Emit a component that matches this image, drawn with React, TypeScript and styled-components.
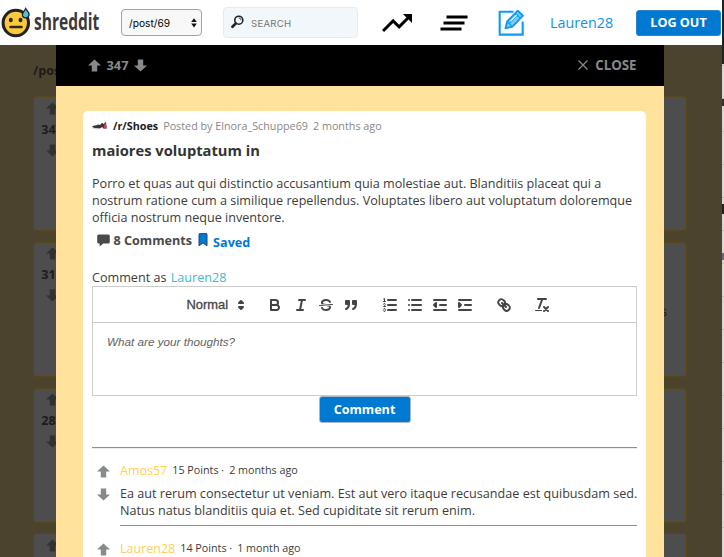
import React from "react";
import styled, { createGlobalStyle } from "styled-components";
import { MdClearAll, MdTrendingUp } from "react-icons/md";

const GlobalStyle = createGlobalStyle`
  *, *::before, *::after { box-sizing: border-box; }
  body { margin: 0; overflow: hidden; font-family: "Open Sans", sans-serif; font-size: 12.61px; line-height: 17px; color: #3c3c3c; }
  button { font-family: inherit; }
`;

/* ---------- Shell ---------- */

const Screen = styled.div`
  display: grid;
  grid-template-columns: 722px 2px;
  height: 557px;
  overflow: hidden;
  background: #fff;
`;

const Site = styled.div`
  display: flex;
  flex-direction: column;
  min-height: 0;
`;

const WindowEdge = styled.div`
  background:
    linear-gradient(#333, #333) 0 99px / 2px 7px no-repeat,
    linear-gradient(#222, #222) 0 204px / 2px 10px no-repeat,
    linear-gradient(#667, #667) 0 253px / 2px 7px no-repeat,
    linear-gradient(#1d2427, #1d2427) 0 0 / 2px 64px no-repeat,
    repeating-linear-gradient(#d9d9d9 0 32px, #bcbcbc 32px 33px);
`;

const Header = styled.header`
  display: flex;
  align-items: center;
  flex: 0 0 45px;
  padding-left: 1px;
  background: #fff;
`;

const Brand = styled.a`
  display: flex;
  align-items: center;
  gap: 2px;
  flex: 0 0 120px;
  width: 120px;
  & > svg { flex: none; }
`;

const BrandName = styled.span`
  width: 66px;
  font: 700 22.5px/30px "Open Sans", sans-serif;
  color: #3a3a3a;
  transform: scaleX(0.69);
  transform-origin: 0 50%;
  margin-top: -2px;
`;

const PageSelect = styled.button`
  display: flex;
  align-items: center;
  justify-content: space-between;
  width: 81px;
  height: 27px;
  padding: 0 4px 0 7px;
  border: 1px solid #a2a2a2;
  border-radius: 4px;
  background: #f8f8f8;
  font: 400 10.2px/14px "Inter", sans-serif;
  color: #000;
`;

const SearchBox = styled.div`
  display: flex;
  align-items: center;
  gap: 7px;
  width: 135px;
  height: 31px;
  margin-left: 21px;
  padding: 0 8px 0 7px;
  border: 1px solid #e6ebee;
  border-radius: 4px;
  background: #f2f7fb;
  font: 400 9.6px/14px "Inter", sans-serif;
  letter-spacing: 0.25px;
  color: #757575;
  & > svg { margin-top: -2px; }
`;

const SearchText = styled.span`
  padding-top: 2px;
`;

const NavIcon = styled.a<{ $gap: number }>`
  display: flex;
  margin-left: ${(p) => p.$gap}px;
  color: #000;
`;

const HeaderUser = styled.a`
  width: 64px;
  margin-left: 25px;
  font-size: 14.3px;
  color: #0d96e6;
  white-space: nowrap;
`;

const BlueButton = styled.button<{ $w: number; $h: number }>`
  width: ${(p) => p.$w}px;
  height: ${(p) => p.$h}px;
  padding: 0;
  border: 1px solid #a9b8c4;
  border-radius: 3px;
  background: #0079d3;
  color: #fff;
  font-size: 12.6px;
  font-weight: 700;
  line-height: 17px;
  white-space: nowrap;
`;

const LogOut = styled(BlueButton)`
  margin-left: 22px;
  border-color: #2a86cc;
`;

/* ---------- Dimmed feed behind the post ---------- */

const Body = styled.main`
  position: relative;
  flex: 1;
  min-height: 0;
  overflow: hidden;
  padding: 17px 35px 0 33px;
  background: #4c432f;
`;

const FeedTitle = styled.h2`
  margin: 0 0 17px;
  font-size: 12.6px;
  line-height: 17px;
  color: #1d1b18;
`;

const FeedList = styled.div`
  display: flex;
  flex-direction: column;
  gap: 10.5px;
`;

const FeedCard = styled.article`
  display: flex;
  justify-content: space-between;
  flex: 0 0 135.3px;
  border: 1px solid #584718;
  border-radius: 4px;
  background: #4d4d4d;
  color: #1c1c1c;
`;

const FeedVotes = styled.div`
  display: flex;
  flex-direction: column;
  align-items: center;
  width: 36px;
  padding-top: 4.5px;
  color: #2f3134;
  gap: 6px;
`;

const FeedScore = styled.b`
  line-height: 17px;
  color: #1c1c1c;
`;

const FeedTail = styled.span`
  padding: 60px 19px 0 0;
`;

/* ---------- Modal ---------- */

const Modal = styled.section`
  position: absolute;
  top: 0;
  bottom: 0;
  left: 56px;
  width: 608px;
  overflow: hidden;
  background: #ffe29b;
`;

const ModalBar = styled.div`
  display: flex;
  align-items: center;
  justify-content: space-between;
  height: 41px;
  padding: 0 27.5px 1px 32px;
  background: #000;
  color: #878a8c;
  font-weight: 700;
`;

const BarVotes = styled.div`
  display: flex;
  align-items: center;
  gap: 5.5px;
  font-size: 12.8px;
`;

const Close = styled.button`
  display: flex;
  align-items: center;
  gap: 7px;
  padding: 0;
  border: 0;
  background: none;
  color: #878a8c;
  font-size: 13.3px;
  font-weight: 700;
`;

const Post = styled.article`
  width: 563px;
  height: 500px;
  margin: 25px 0 0 27px;
  padding: 6px 9px 0;
  border-radius: 5px;
  background: #fff;
`;

const Meta = styled.div`
  display: flex;
  align-items: center;
  height: 17px;
  gap: 5px;
  font-size: 10.78px;
  color: #888;
`;

const Community = styled.b`
  margin-left: 1px;
  color: #1c1c1c;
`;

const Title = styled.h1`
  margin: 7px 0 15px;
  font-size: 14.7px;
  line-height: 19px;
  color: #333;
`;

const Text = styled.p`
  margin: 0;
  line-height: 17px;
  white-space: pre;
`;

const Actions = styled.div`
  display: flex;
  align-items: center;
  height: 22px;
  padding: 0 0 0 4.5px;
  margin-top: 3px;
  font-weight: 700;
  color: #4a4a4a;
`;

const CommentCount = styled.span`
  margin: 0 6px 0 4px;
`;

const Saved = styled.span`
  margin: 4px 0 0 5px;
  color: #0079d3;
`;

const CommentAs = styled.div`
  margin-top: 18px;
  height: 17px;
`;

const AccentUser = styled.a`
  color: #3fb8d3;
  margin-left: 1px;
`;

const Editor = styled.div`
  height: 110px;
  border: 1px solid #ccc;
`;

const Toolbar = styled.div`
  display: flex;
  align-items: center;
  gap: 13.2px;
  height: 36px;
  padding: 0 0 0 93.5px;
  border-bottom: 1px solid #ccc;
  color: #444;
`;

const FormatPicker = styled.div`
  display: flex;
  align-items: center;
  justify-content: space-between;
  width: 63px;
  font: 400 12.9px/18px "Liberation Sans", sans-serif;
  -webkit-text-stroke: 0.3px #444;
`;

const ToolGroup = styled.div`
  display: flex;
  & > svg { margin: 0 3.65px; }
`;

const Placeholder = styled.div`
  padding: 11px 14px;
  font: italic 400 11.7px/16px "Liberation Sans", sans-serif;
  color: #636363;
`;

const Submit = styled.div`
  display: flex;
  justify-content: center;
  height: 51px;
`;

const Thread = styled.section`
  border-top: 1px solid #8f8f8f;
  box-shadow: inset 0 1px #ececec;
  padding-top: 14px;
`;

const Comment = styled.article`
  display: grid;
  grid-template-columns: 28px 1fr;
  height: 78px;
`;

const CommentVotes = styled.div`
  display: flex;
  flex-direction: column;
  gap: 10px;
  padding: 2.5px 0 0 5px;
  color: #878a8c;
`;

const CommentBody = styled.div`
  height: 64px;
  border-bottom: 1px solid #8f8f8f;
  white-space: nowrap;
`;

const CommentMeta = styled.div`
  display: flex;
  align-items: center;
  height: 17px;
  margin-bottom: 6px;
  font-size: 10.75px;
`;

const Author = styled.a`
  margin-right: 5px;
  font-size: 12.5px;
  color: #ffd152;
`;

const Age = styled.span`
  margin-left: 5px;
`;

/* ---------- Icons ---------- */

const Glyph = styled.svg`
  flex: none;
`;

const Arrow = ({ down = false }: { down?: boolean }) => (
  <Glyph width="13" height="13" viewBox="0 0 13 13" fill="currentColor">
    <path d={down ? "M3.8 0.5h5.4v6H13L6.5 12.6 0 6.5h3.8z" : "M6.5 0.4 13 6.5H9.2v6H3.8v-6H0z"} />
  </Glyph>
);

const Face = () => (
  <svg width="31" height="31" viewBox="0 0 31 31">
    <circle cx="14.8" cy="16" r="12.7" fill="#fdc93c" stroke="#222" strokeWidth="3.1" />
    <ellipse cx="9.8" cy="13" rx="2" ry="2.2" fill="#2b2926" />
    <ellipse cx="19.5" cy="13" rx="2" ry="2.2" fill="#2b2926" />
    <path d="M9.5 20h11" stroke="#2b2926" strokeWidth="2.5" strokeLinecap="round" />
    <path d="M24.7 1.5c-1 2.1-3.3 4-3.3 6a3.3 3.3 0 0 0 6.7 0c0-2-2.3-3.9-3.4-6z" fill="#4fc3dc" stroke="#222" strokeWidth="1.3" />
  </svg>
);

const Magnifier = () => (
  <svg width="13" height="14" viewBox="0 0 13 14" fill="none" stroke="#222">
    <circle cx="7.8" cy="5.2" r="4" strokeWidth="1.6" />
    <path d="M7.8 3a2.3 2.3 0 0 1 2.2 2.2" strokeWidth="0.8" />
    <path d="M4.8 8.4 1.5 11.7" strokeWidth="2.7" strokeLinecap="round" />
  </svg>
);

const Compose = () => (
  <svg width="27" height="27" viewBox="0 0 27 27" fill="none" stroke="#0d9bf5">
    <path d="M15.5 2.7H1.7v22.9h23V12.5" strokeWidth="2.1" />
    <path d="M7.5 19.3 9.2 12.5 19.8 1.7 25 6.7 14.4 17.6z" fill="#8acbf5" strokeWidth="1.9" strokeLinejoin="round" />
    <path d="m17.2 4.4 5.1 5M9.3 12.6l5 5M11.4 14.4 20.3 5.5" strokeWidth="1.3" />
    <path d="M12.5 12.4 18.8 6" stroke="#e8f6ff" strokeWidth="1.1" />
  </svg>
);

const SelectArrows = () => (
  <svg width="6" height="10" viewBox="0 0 6 10" fill="#111">
    <path d="M3 0.2 5.8 4H0.2zM3 9.4.2 5.6h5.6z" />
  </svg>
);

const CrossIcon = () => (
  <svg width="10" height="10" viewBox="0 0 10 10" stroke="currentColor" strokeWidth="1.2">
    <path d="M0.5 0.5l9 9M9.5 0.5l-9 9" />
  </svg>
);

const Shoe = () => (
  <svg width="15" height="9" viewBox="0 0 15 9">
    <path d="M0 5.5C2 4 4 4.8 6.2 3.4L8 4 10 1.8 11.5 3 14 0.8 14.6 7.4H11L10.5 6 7.5 7.5 1.5 6.8z" fill="#363338" />
    <path d="M11.8 4 13.8 1.2 14.7 7.5H12z" fill="#d73c50" />
    <path d="M0.5 7.3 8 8.1" stroke="#bbb" strokeWidth="0.6" />
  </svg>
);

const Bubble = () => (
  <svg width="13" height="13" viewBox="0 0 13 13" fill="#4a4a4a">
    <path d="M1.7.5h9.6a1.5 1.5 0 0 1 1.5 1.5v6a1.5 1.5 0 0 1-1.5 1.5H6.3L2.7 12.6V9.5h-1A1.5 1.5 0 0 1 .2 8V2A1.5 1.5 0 0 1 1.7.5z" />
  </svg>
);

const Bookmark = () => (
  <svg width="10" height="14" viewBox="0 0 10 14">
    <path d="M1 1.2Q1 .6 1.6.6h6.8q.6 0 .6.6v11.6L5 9.9l-4 2.9z" fill="#0079d3" stroke="#29475f" />
  </svg>
);

const Tool = ({ children }: { children: React.ReactNode }) => (
  <svg width="18" height="18" viewBox="0 0 18 18" fill="none" stroke="#444" strokeWidth="2" strokeLinecap="round" strokeLinejoin="round">
    {children}
  </svg>
);

const solid = { fill: "#444", stroke: "none" };

/* ---------- Data ---------- */

const feed = [
  { score: "347", tail: "" },
  { score: "315", tail: "s" },
  { score: "289", tail: "" },
];

const comments = [
  { author: "Amos57", points: "15 Points ·", age: "2 months ago", text: "Ea aut rerum consectetur ut veniam. Est aut vero itaque recusandae est quibusdam sed.\nNatus natus blanditiis quia et. Sed cupiditate sit rerum enim." },
  { author: "Lauren28", points: "14 Points ·", age: "1 month ago", text: "" },
];

export default function App() {
  return (
    <Screen>
      <GlobalStyle />
      <Site>
        <Header>
          <Brand>
            <Face />
            <BrandName>shreddit</BrandName>
          </Brand>
          <PageSelect>/post/69<SelectArrows /></PageSelect>
          <SearchBox><Magnifier /><SearchText>SEARCH</SearchText></SearchBox>
          <NavIcon $gap={21}><MdTrendingUp size={36} /></NavIcon>
          <NavIcon $gap={21}><MdClearAll size={36} /></NavIcon>
          <NavIcon $gap={26}><Compose /></NavIcon>
          <HeaderUser>Lauren28</HeaderUser>
          <LogOut $w={85} $h={26}>LOG OUT</LogOut>
        </Header>
        <Body>
          <FeedTitle>/post/69</FeedTitle>
          <FeedList>
            {feed.map((item) => (
              <FeedCard key={item.score}>
                <FeedVotes><Arrow /><FeedScore>{item.score}</FeedScore><Arrow down /></FeedVotes>
                <FeedTail>{item.tail}</FeedTail>
              </FeedCard>
            ))}
            <FeedCard>
              <FeedVotes><Arrow /></FeedVotes>
            </FeedCard>
          </FeedList>
          <Modal>
            <ModalBar>
              <BarVotes><Arrow />347<Arrow down /></BarVotes>
              <Close><CrossIcon />CLOSE</Close>
            </ModalBar>
            <Post>
              <Meta>
                <Shoe />
                <Community>/r/Shoes</Community>
                <span>Posted by Elnora_Schuppe69</span>
                <span>2 months ago</span>
              </Meta>
              <Title>maiores voluptatum in</Title>
              <Text>{"Porro et quas aut qui distinctio accusantium quia molestiae aut. Blanditiis placeat qui a\nnostrum ratione cum a similique repellendus. Voluptates libero aut voluptatum doloremque\nofficia nostrum neque inventore."}</Text>
              <Actions>
                <Bubble />
                <CommentCount>8 Comments</CommentCount>
                <Bookmark />
                <Saved>Saved</Saved>
              </Actions>
              <CommentAs>Comment as <AccentUser>Lauren28</AccentUser></CommentAs>
              <Editor>
                <Toolbar>
                  <FormatPicker>
                    Normal
                    <Tool><path d="M7 11 9 13 11 11zM7 7 9 5 11 7z" fill="#444" /></Tool>
                  </FormatPicker>
                  <ToolGroup>
                    <Tool>
                      <path d="M5,4H9.5A2.5,2.5,0,0,1,12,6.5v0A2.5,2.5,0,0,1,9.5,9H5V4Z" />
                      <path d="M5,9h5.5A2.5,2.5,0,0,1,13,11.5v0A2.5,2.5,0,0,1,10.5,14H5V9Z" />
                    </Tool>
                    <Tool><path d="M7 4h6M5 14h6M8 14 10 4" /></Tool>
                    <Tool>
                      <path d="M15.5 8.5 2.5 9.5" strokeWidth="1" />
                      <path {...solid} d="M9.007,8C6.542,7.791,6,7.519,6,6.5,6,5.792,7.283,5,9,5c1.571,0,2.765.679,2.969,1.309a1,1,0,0,0,1.9-.617C13.356,4.106,11.354,3,9,3,6.2,3,4,4.538,4,6.5a3.2,3.2,0,0,0,.5,1.843Z" />
                      <path {...solid} d="M8.984,10C11.457,10.208,12,10.479,12,11.5c0,0.708-1.283,1.5-3,1.5-1.571,0-2.765-.679-2.969-1.309a1,1,0,1,0-1.9.617C4.644,13.894,6.646,15,9,15c2.8,0,5-1.538,5-3.5a3.2,3.2,0,0,0-.5-1.843Z" />
                    </Tool>
                    <Tool>
                      <path fill="#444" d="M4 5h3v3H4zM11 5h3v3h-3zM7,8c0,4.031-3,5-3,5M14,8c0,4.031-3,5-3,5" />
                    </Tool>
                  </ToolGroup>
                  <ToolGroup>
                    <Tool>
                      <path d="M7 4h8M7 9h8M7 14h8" />
                      <path d="M2.5 5.5h2M4.5,10.5h-2c0-.234,1.85-1.076,1.85-2.234A0.959,0.959,0,0,0,2.5,8.156M2.5,14.846a0.959,0.959,0,0,0,1.85-.109A0.7,0.7,0,0,0,3.75,14a0.688,0.688,0,0,0,.6-0.736,0.959,0.959,0,0,0-1.85-.109M2.6 3 3.5 2.5v3" strokeWidth="1" />
                    </Tool>
                    <Tool><path d="M6 4h9M6 9h9M6 14h9M3 4h0M3 9h0M3 14h0" /></Tool>
                    <Tool><path d="M3 14h12M3 4h12M9 9h6" /><path d="M5 7v4L3 9z" fill="#444" /></Tool>
                    <Tool><path d="M3 14h12M3 4h12M9 9h6" /><path d="M3 7v4l2-2z" fill="#444" /></Tool>
                  </ToolGroup>
                  <ToolGroup>
                    <Tool>
                      <path d="M7 7 11 11M8.9,4.577a3.476,3.476,0,0,1,.36,4.679A3.476,3.476,0,0,1,4.577,8.9C3.185,7.5,2.035,6.4,4.217,4.217S7.5,3.185,8.9,4.577ZM13.423,9.1a3.476,3.476,0,0,0-4.679-.36,3.476,3.476,0,0,0,.36,4.679c1.392,1.392,2.5,2.542,4.679.36S14.815,10.5,13.423,9.1Z" />
                    </Tool>
                  </ToolGroup>
                  <ToolGroup>
                    <Tool>
                      <path d="M5 3h8M6 12 9.35 3M11 11l4 4M15 11l-4 4" />
                      <rect {...solid} x="2" y="14" width="7" height="1" rx=".5" />
                    </Tool>
                  </ToolGroup>
                </Toolbar>
                <Placeholder>What are your thoughts?</Placeholder>
              </Editor>
              <Submit><BlueButton $w={92} $h={27}>Comment</BlueButton></Submit>
              <Thread>
                {comments.map((c) => (
                  <Comment key={c.author}>
                    <CommentVotes><Arrow /><Arrow down /></CommentVotes>
                    <CommentBody>
                      <CommentMeta>
                        <Author>{c.author}</Author>
                        <span>{c.points}</span>
                        <Age>{c.age}</Age>
                      </CommentMeta>
                      <Text>{c.text}</Text>
                    </CommentBody>
                  </Comment>
                ))}
              </Thread>
            </Post>
          </Modal>
        </Body>
      </Site>
      <WindowEdge />
    </Screen>
  );
}
